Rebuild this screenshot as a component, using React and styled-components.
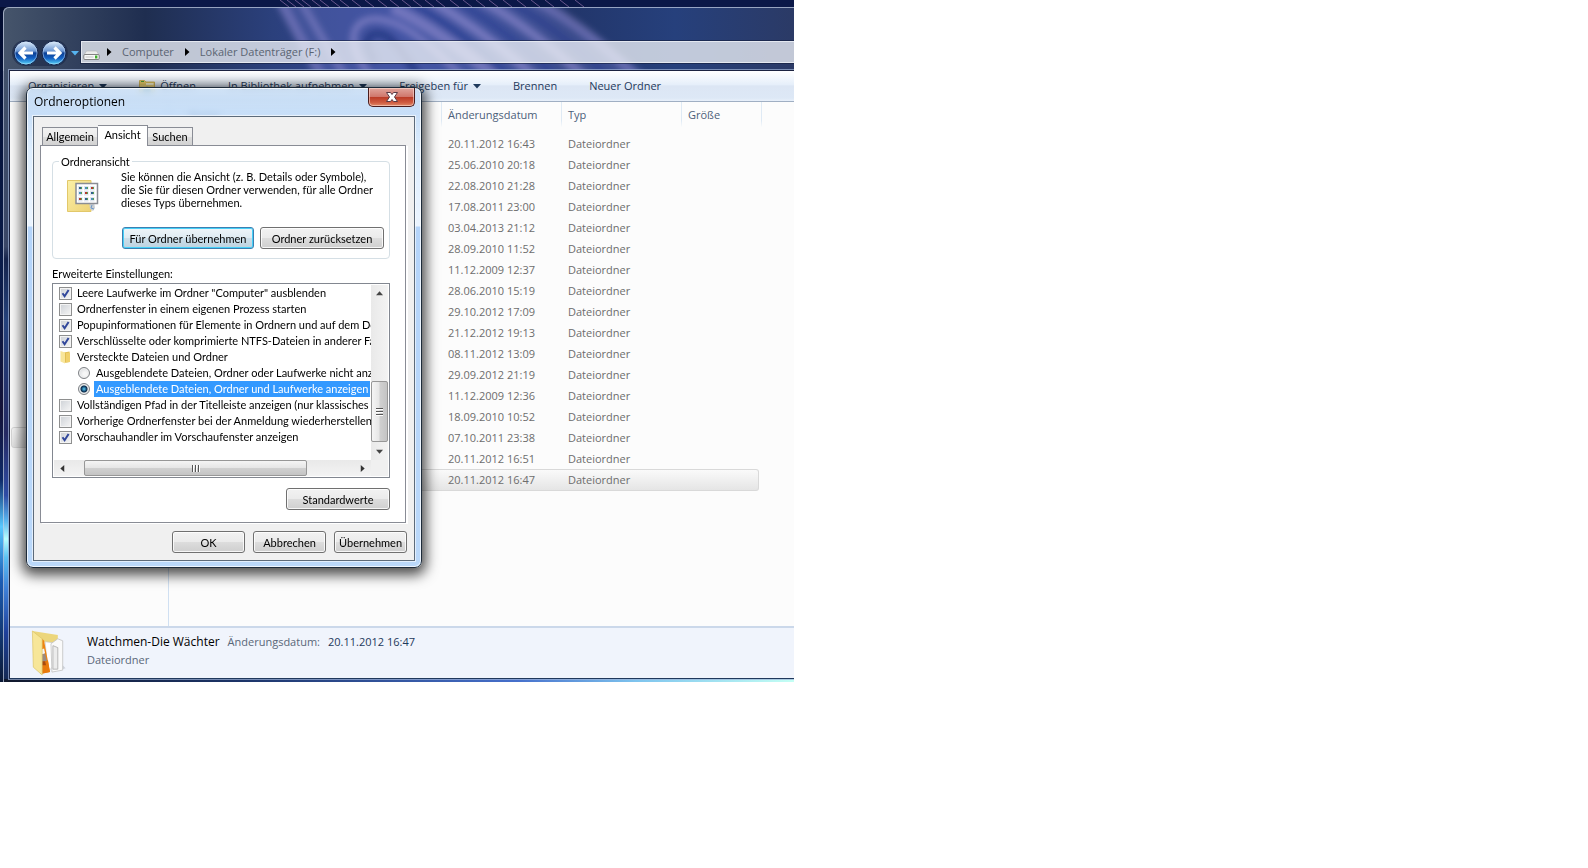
import React from "react";
import styled, { createGlobalStyle, css } from "styled-components";

const GlobalStyle = createGlobalStyle`
  * {
    box-sizing: border-box;
  }
  body {
    margin: 0;
    background: #ffffff;
    font-family: "Open Sans", "Noto Sans", sans-serif;
    font-size: 11px;
    line-height: 16px;
  }
  button, input {
    font: inherit;
    margin: 0;
  }
`;

/* desktop + explorer window */

const Desktop = styled.main`
  position: relative;
  width: 50%;
  overflow: hidden;
  padding: 7px 0 0 3px;
  background: #081536;
`;

const WallpaperSvg = styled.svg`
  position: absolute;
  top: 0;
  left: 0;
  width: 100%;
  height: 100%;
`;

const Explorer = styled.section`
  position: relative;
  border: 1px solid rgba(200, 210, 230, 0.7);
  border-right: 0;
  border-bottom: 0;
  border-top-left-radius: 6px;
  padding: 33px 0 3px 5px;
`;

const NavBar = styled.nav`
  display: flex;
  align-items: center;
  height: 24px;
  margin-bottom: 5px;
  padding-left: 3px;
`;

const NavButtons = styled.div`
  display: flex;
  gap: 2px;
  padding: 0 1px;
  border-radius: 14px;
  background: rgba(20, 32, 64, 0.5);
`;

const NavButton = styled.button`
  width: 26px;
  height: 26px;
  padding: 0;
  border: 0;
  background: none;
  svg {
    display: block;
  }
`;

const HistoryButton = styled.button`
  width: 13px;
  height: 20px;
  padding: 0;
  border: 0;
  background: none;
`;

const AddressBar = styled.div`
  flex: 1;
  align-self: flex-start;
  display: flex;
  align-items: center;
  gap: 9px;
  height: 22px;
  padding-left: 1px;
  border: 1px solid #e4e8f0;
  border-right: 0;
  outline: 1px solid rgba(20, 30, 60, 0.6);
  background: rgba(235, 238, 245, 0.79);
`;

const DriveSvg = styled.svg`
  align-self: flex-end;
  margin-right: -4px;
`;

const Crumb = styled.button`
  padding: 0;
  border: 0;
  background: none;
  color: #5a6472;
`;

const Client = styled.div`
  border-top: 1px solid #1c2340;
  border-left: 1px solid #1c2340;
  border-bottom: 1px solid #20385c;
  outline: 1px solid rgba(160, 180, 215, 0.7);
  background: #fcfcfc;
`;

const CommandBar = styled.div`
  display: flex;
  align-items: center;
  height: 31px;
  padding-left: 18px;
  gap: 32px;
  border-bottom: 1px solid #a0afc3;
  background: linear-gradient(#ffffff, #e6effa 45%, #dce6f4 50%, #dde8f6 90%, #e8f0fa);
`;

const Command = styled.button`
  display: flex;
  align-items: center;
  gap: 5px;
  padding: 0;
  border: 0;
  background: none;
  color: #1e395b;
  white-space: nowrap;
`;

const Body = styled.div`
  display: flex;
  height: 524px;
`;

const NavPane = styled.aside`
  width: 159px;
  flex: none;
  padding: 325px 8px 0 1px;
  border-right: 1px solid #d0e0f2;
`;

const NavSelection = styled.div`
  height: 21px;
  border: 1px solid #d9d9d9;
  border-radius: 3px;
  background: linear-gradient(#fafafa, #e6e6e6);
`;

const FileArea = styled.div`
  flex: 1;
  overflow: hidden;
`;

const FileTable = styled.table`
  width: 591px;
  margin-left: 2px;
  table-layout: fixed;
  border-collapse: separate;
  border-spacing: 0;
  text-align: left;
`;

const HeadCell = styled.th`
  height: 31px;
  padding: 0 6px 6px;
  font-weight: 400;
  color: #4c607a;
  border-right: 1px solid;
  border-image: linear-gradient(#dfeaf5 60%, transparent 80%) 1;

  &:first-child {
    padding-left: 18px;
  }
`;

const Cell = styled.td`
  height: 21px;
  padding: 0 6px;
  color: #6d6d6d;
  line-height: 16px;
`;

const FileRow = styled.tr`
  ${(props) =>
    props.$selected &&
    css`
      ${Cell} {
        height: 22px;
        border: solid #d9d9d9;
        border-width: 1px 0;
        background: linear-gradient(#fafafa, #e5e5e5);
      }
      ${Cell}:first-child {
        border-left-width: 1px;
        border-radius: 3px 0 0 3px;
      }
      ${Cell}:last-child {
        border-right-width: 1px;
        border-radius: 0 3px 3px 0;
      }
    `}
`;

const DetailsPane = styled.footer`
  display: flex;
  gap: 20px;
  height: 52px;
  padding: 2px 0 0 21px;
  border-top: 2px solid #cbd8ea;
  background: #f0f4fc;
  color: #5a6779;
`;

const DetailsText = styled.div`
  padding-top: 3px;
  line-height: 18px;
`;

const DetailsLine = styled.div`
  display: flex;
  gap: 8px;
`;

const FileTitle = styled.span`
  font-size: 12px;
  color: #000000;
`;

const DetailsValue = styled.span`
  color: #1e395b;
`;

/* dialog */

const Dialog = styled.section`
  position: absolute;
  top: 87px;
  left: 26px;
  width: 396px;
  padding: 0 6px 6px;
  border: 1px solid #1d2b3a;
  border-radius: 7px;
  background: linear-gradient(
      rgba(205, 225, 246, 0.78),
      rgba(185, 214, 246, 0.8) 24px,
      rgba(218, 236, 254, 0.94) 60px,
      rgba(234, 244, 255, 0.96) 138px,
      #b4d4fa 139px,
      #bad8fa
    );
  backdrop-filter: blur(3px);
  box-shadow: inset 0 0 0 1px rgba(255, 255, 255, 0.75), 0 3px 13px 4px rgba(0, 0, 0, 0.7);
`;

const TitleBar = styled.header`
  display: flex;
  justify-content: space-between;
  height: 28px;
`;

const DialogTitle = styled.h1`
  margin: 5px 0 0 1px;
  font-size: 12px;
  line-height: 18px;
  font-weight: 400;
  color: #000000;
`;

const CloseButton = styled.button`
  width: 47px;
  height: 19px;
  padding: 0;
  border: 1px solid #4a1c1c;
  border-top: 0;
  border-radius: 0 0 5px 5px;
  background: linear-gradient(#e0a59c, #d0776c 48%, #b93a26 50%, #cf5b40 80%, #e08a68);
  box-shadow: inset 0 0 0 1px rgba(255, 220, 210, 0.6);
  svg {
    display: block;
    margin: 0 auto;
  }
`;

const DialogBody = styled.div`
  padding: 8px 7px 7px 6px;
  border: 1px solid #5d6b7a;
  outline: 1px solid rgba(255, 255, 255, 0.6);
  background: #f0f0f0;
  font-family: Lato, "Liberation Sans", sans-serif;
  font-size: 11px;
  line-height: 13px;
  color: #000000;
`;

const Tabs = styled.div`
  display: flex;
  align-items: flex-end;
  padding-left: 2px;
`;

const Tab = styled.button`
  height: ${(props) => (props.$active ? 21 : 18)}px;
  width: ${(props) => props.$width}px;
  padding: 0;
  border: 1px solid #898c95;
  border-bottom: 0;
  color: #000000;
  white-space: nowrap;
  background: ${(props) => (props.$active ? "#ffffff" : "linear-gradient(#f2f2f2, #ebebeb 50%, #dddddd 51%, #d2d2d2)")};

  & + & {
    border-left-width: ${(props) => (props.$active ? 1 : 0)}px;
  }

  ${(props) =>
    props.$active &&
    css`
      position: relative;
      margin-bottom: -1px;
      padding-bottom: 3px;
    `}
`;

const TabPanel = styled.div`
  margin-right: 1px;
  padding: 9px 15px 12px 11px;
  border: 1px solid #898c95;
  background: #ffffff;
  box-shadow: 2px 1px 0 #ffffff;
`;

const Group = styled.fieldset`
  margin: 0;
  padding: 2px 5px 9px 14px;
  border: 1px solid #d5dfe5;
  border-radius: 4px;
  min-width: 0;
`;

const Legend = styled.legend`
  margin-left: -8px;
  padding: 0 2px;
`;

const GroupText = styled.div`
  display: flex;
  gap: 22px;
  svg {
    flex: none;
    margin-top: 10px;
  }
`;

const Paragraph = styled.p`
  margin: 0;
  white-space: nowrap;
`;

const ButtonRow = styled.div`
  display: flex;
  justify-content: flex-end;
  gap: ${(props) => props.$gap || 6}px;
  margin-top: ${(props) => props.$top}px;
`;

const Button = styled.button`
  width: ${(props) => props.$width || 73}px;
  height: 22px;
  padding: 0;
  white-space: nowrap;
  border: 1px solid #707070;
  border-radius: 3px;
  color: #000000;
  background: linear-gradient(#f2f2f2, #ebebeb 48%, #dddddd 50%, #cfcfcf);
  box-shadow: inset 0 0 0 1px rgba(255, 255, 255, 0.8);

  ${(props) =>
    props.$focused &&
    css`
      border-color: #3c7fb1;
      background: linear-gradient(#eef5f9, #dfebf2 48%, #ccdee9 50%, #bdd3e0);
      box-shadow: inset 0 0 0 1px #46d0f8;
    `}
`;

const ListLabel = styled.div`
  margin: 8px 0 3px;
`;

const ListBox = styled.div`
  display: grid;
  grid-template-columns: minmax(0, 1fr) 17px;
  grid-template-rows: 175px 16px;
  padding: 1px;
  border: 1px solid #828790;
`;

const Options = styled.div`
  overflow: hidden;
`;

const Option = styled.label`
  display: flex;
  align-items: center;
  gap: 3px;
  height: 16px;
  padding-left: ${(props) => (props.$nested ? 24 : 5)}px;
  white-space: nowrap;
`;

const OptionText = styled.span`
  padding: 0 2px;
  line-height: 16px;
  ${(props) =>
    props.$selected &&
    css`
      background: #3399ff;
      color: #ffffff;
    `}
`;

const CheckBox = styled.input`
  appearance: none;
  flex: none;
  width: 13px;
  height: 13px;
  border: 1px solid #8e8f8f;
  background: linear-gradient(135deg, #cdd1d6, #f6f6f6);
  box-shadow: inset 0 0 0 1px #f4f4f4;

  &:checked {
    background: url("data:image/svg+xml,%3Csvg xmlns='http://www.w3.org/2000/svg' viewBox='0 0 11 11'%3E%3Cpath d='M2.5 5.2 4.6 8.2 8.6 2' fill='none' stroke='%2331479b' stroke-width='2'/%3E%3C/svg%3E"),
      linear-gradient(135deg, #cdd1d6, #f6f6f6);
  }
`;

const Radio = styled.input`
  appearance: none;
  flex: none;
  width: 12px;
  height: 12px;
  margin-right: 1px;
  border: 1px solid #7d8084;
  border-radius: 50%;
  background: radial-gradient(circle at 60% 60%, #f6f6f6 20%, #cfd2d6);
  box-shadow: inset 0 0 0 1px #f0f0f0;

  &:checked {
    background: radial-gradient(circle, #5fd0f0 0, #1c5d8c 2px, #0b2b48 3px, #d5dade 4px);
  }
`;

const ScrollBar = styled.div`
  display: flex;
  flex-direction: ${(props) => (props.$vertical ? "column" : "row")};
  background: linear-gradient(${(props) => (props.$vertical ? "to right" : "to bottom")}, #e9e9e9, #f3f3f3);
`;

const Arrow = styled.button`
  flex: none;
  display: flex;
  align-items: center;
  justify-content: center;
  width: 17px;
  height: 16px;
  padding: 0;
  border: 0;
  background: none;
`;

const Track = styled.div`
  flex: ${(props) => props.$size} 0 0;
`;

const Thumb = styled.div`
  flex: ${(props) => props.$size} 0 0;
  display: flex;
  flex-direction: ${(props) => (props.$vertical ? "column" : "row")};
  align-items: center;
  justify-content: center;
  gap: 1px;
  border: 1px solid #979797;
  border-radius: 2px;
  background: linear-gradient(${(props) => (props.$vertical ? "to right" : "to bottom")}, #f5f5f5, #e6e6e6 48%, #d0d0d0 52%, #c4c4c4);
`;

const Grip = styled.span`
  width: ${(props) => (props.$vertical ? 7 : 2)}px;
  height: ${(props) => (props.$vertical ? 2 : 7)}px;
  background: ${(props) => (props.$vertical ? "linear-gradient(#555 50%, #fff 50%)" : "linear-gradient(to right, #555 50%, #fff 50%)")};
`;

const Corner = styled.div`
  background: #f0f0f0;
`;

/* drawings */

const Wallpaper = () => (
  <WallpaperSvg viewBox="0 0 794 682" preserveAspectRatio="none" aria-hidden="true">
    <defs>
      <linearGradient id="glass">
        <stop offset="0" stopColor="#46556b" />
        <stop offset=".08" stopColor="#34435f" />
        <stop offset=".18" stopColor="#1f2e50" />
        <stop offset=".34" stopColor="#2b407c" />
        <stop offset=".5" stopColor="#34489a" />
        <stop offset=".62" stopColor="#2c4288" />
        <stop offset=".72" stopColor="#22366b" />
        <stop offset=".85" stopColor="#26407c" />
        <stop offset="1" stopColor="#2b3a66" />
      </linearGradient>
      <linearGradient id="edge" x1="0" y1="0" x2="0" y2="1">
        <stop offset="0" stopColor="#42516b" />
        <stop offset=".3" stopColor="#3a4768" />
        <stop offset=".32" stopColor="#16244c" />
        <stop offset=".42" stopColor="#25427c" />
        <stop offset=".6" stopColor="#252a62" />
        <stop offset=".7" stopColor="#2f4da5" />
        <stop offset=".74" stopColor="#5ab4ee" />
        <stop offset=".77" stopColor="#b8ffff" />
        <stop offset=".8" stopColor="#5cc2f4" />
        <stop offset=".85" stopColor="#3f80d8" />
        <stop offset=".92" stopColor="#1e409a" />
        <stop offset="1" stopColor="#142850" />
      </linearGradient>
      <linearGradient id="bottomEdge">
        <stop offset="0" stopColor="#10182c" />
        <stop offset=".3" stopColor="#1c3468" />
        <stop offset=".65" stopColor="#4670cc" />
        <stop offset=".8" stopColor="#7ec4ee" />
        <stop offset="1" stopColor="#c4fff4" />
      </linearGradient>
      <linearGradient id="desk" x1="0" y1="0" x2="0" y2="1">
        <stop offset="0" stopColor="#040e30" />
        <stop offset=".4" stopColor="#0a1c4a" />
        <stop offset=".6" stopColor="#141238" />
        <stop offset=".7" stopColor="#0e2a68" />
        <stop offset=".77" stopColor="#58c8ff" />
        <stop offset=".85" stopColor="#1c5cb4" />
        <stop offset="1" stopColor="#0a1836" />
      </linearGradient>
      <filter id="soft" x="-10%" y="-20%" width="120%" height="140%">
        <feGaussianBlur stdDeviation="3" />
      </filter>
    </defs>
    <path d="M0 7H9V682H0Z" fill="url(#desk)" />
    <path d="M0 0H794V7H0Z" fill="#0b1848" />
    <g stroke="#9a78b0" strokeWidth="1" opacity=".65">
      {[280, 287, 295, 302, 312, 320, 331, 340, 352, 365, 378, 390, 402, 413, 425, 436, 450, 463, 476, 489, 503, 517, 531, 545, 560, 575].map((x) => (
        <path key={x} d={`M${x} 0l9 7`} />
      ))}
    </g>
    <path d="M9 7H794V71H3V13Q3 7 9 7Z" fill="url(#glass)" />
    <svg x="4" y="8" width="790" height="62" viewBox="4 8 790 62">
      <g fill="none" stroke="#8684c8" filter="url(#soft)">
        <path d="M276 0H540L655 80H325Z" fill="#5866b4" stroke="none" opacity=".45" />
        <path d="M280 0C290 20 304 45 322 78" strokeWidth="10" opacity=".55" />
        <path d="M300 0C314 24 326 44 346 78" strokeWidth="7" opacity=".6" />
        <path d="M372 78C338 36 356 14 384 20S440 55 466 80" strokeWidth="6" opacity=".75" />
        <path d="M376 62C362 44 366 32 380 34S404 56 420 78" stroke="#233a86" strokeWidth="9" opacity=".9" />
        <path d="M392 8C420 20 462 48 498 80" strokeWidth="11" opacity=".7" />
        <path d="M412 4C450 24 480 48 512 80" stroke="#2a4192" strokeWidth="7" opacity=".8" />
        <path d="M430 0C470 24 510 54 538 80" strokeWidth="9" opacity=".75" />
        <path d="M455 0C490 20 530 52 560 80" stroke="#2a4192" strokeWidth="7" opacity=".7" />
        <path d="M480 0C515 18 560 54 588 80" strokeWidth="9" opacity=".7" />
        <path d="M505 0C545 20 585 54 612 80" stroke="#2a3f8c" strokeWidth="6" opacity=".8" />
        <path d="M535 0C570 18 610 50 640 80" strokeWidth="10" opacity=".55" />
      </g>
    </svg>
    <path d="M4 60H10V682H4Z" fill="url(#edge)" />
    <path d="M4 679H794V682H4Z" fill="url(#bottomEdge)" />
  </WallpaperSvg>
);

const NavIcon = ({ forward }) => (
  <svg width="26" height="26" viewBox="0 0 26 26">
    <defs>
      <linearGradient id="navTop" x1="0" y1="0" x2="0" y2="1">
        <stop offset="0" stopColor="#e4f0fb" />
        <stop offset=".42" stopColor="#6d98d4" />
        <stop offset=".5" stopColor="#0c3f94" />
        <stop offset=".72" stopColor="#1462c4" />
        <stop offset="1" stopColor="#5fe0ff" />
      </linearGradient>
    </defs>
    <circle cx="13" cy="13" r="12" fill="url(#navTop)" stroke="#15264e" />
    <circle cx="13" cy="13" r="11" fill="none" stroke="#c8e0f8" strokeOpacity=".5" />
    <g transform={forward ? "rotate(180 13 13)" : undefined}>
      <path d="M20 13H8M12.5 7.5 7 13l5.500 5.500" fill="none" stroke="#fff" strokeWidth="3.200" />
    </g>
  </svg>
);

const Caret = ({ dir = "down", color = "#1e395b", size = 8 }) => {
  const turn = { down: 0, left: 90, up: 180, right: 270 }[dir];
  return (
    <svg width={size} height={size} viewBox="0 0 8 8" aria-hidden="true">
      <path d="M0 2h8L4 6.500Z" fill={color} transform={`rotate(${turn} 4 4)`} />
    </svg>
  );
};

const DriveIcon = () => (
  <DriveSvg width="17" height="17" viewBox="0 0 17 17" aria-hidden="true">
    <path d="M3.500 6h10l2.500 4H1Z" fill="#ececec" stroke="#b4b4b4" strokeWidth=".6" />
    <rect x=".8" y="9.500" width="15.400" height="5" rx="1.200" fill="#f8f8f8" stroke="#777" strokeWidth=".9" />
    <path d="M2.500 12h8" stroke="#c4c4c4" />
    <rect x="12" y="10.500" width="2.400" height="3" fill="#3fae2a" />
  </DriveSvg>
);

const OpenFolderIcon = () => (
  <svg width="16" height="16" viewBox="0 0 16 16" aria-hidden="true">
    <path d="M.5 14V2.500h5l1.500 1.500H15.500V14Z" fill="#ecd06c" stroke="#c8a848" strokeWidth=".8" />
    <path d="M7 5h7.500v2H7Z" fill="#fdf6d0" />
    <path d="M2 3.500h3" stroke="#4a9d3a" />
    <path d="M.8 14V7h14.400V14Z" fill="#f5dc82" />
    <path d="M4 14c0-7 8-7 8 0Z" fill="#5d9bb8" />
  </svg>
);

const FolderViewIcon = () => (
  <svg width="32" height="32" viewBox="0 0 32 32" aria-hidden="true">
    <defs>
      <linearGradient id="folderPaper" x1="0" y1="0" x2="1" y2="1">
        <stop offset="0" stopColor="#fbf0a6" />
        <stop offset="1" stopColor="#edd277" />
      </linearGradient>
    </defs>
    <path d="M.5.500H24V31.500H.5Z" fill="url(#folderPaper)" stroke="#e2c86a" />
    <path d="M22 22h5l1 6-2 3-3-2Z" fill="#c8ccd0" />
    <path d="M25 25l-1 3 3 1" fill="none" stroke="#6d99c8" />
    <path d="M9 3.500H30.500V23.500H9Z" fill="#fff" stroke="#8a8d94" strokeWidth="1.500" />
    {[7, 12, 18].map((y, row) =>
      [12, 18, 24].map((x, col) => (
        <g key={`${x}-${y}`}>
          <rect x={x - 1} y={y - 1} width="4.500" height="4.500" fill="#dfe5ee" />
          <rect x={x} y={y} width="2" height="2" fill={["#30608c", "#4c8fb8", "#b53a2a"][(row + col) % 3]} />
          <rect x={x + 2} y={y} width="1" height="2" fill="#58a050" />
        </g>
      ))
    )}
  </svg>
);

const SmallFolderIcon = () => (
  <svg width="13" height="14" viewBox="0 0 13 14" aria-hidden="true">
    <path d="M5 2.500 10.500 1.500V12L5 13Z" fill="#e2bf52" />
    <path d="M1.500 1 6 2.500V13.500L1.500 11.500Z" fill="#f8e59a" />
    <path d="M7 3 11 2.500V12L7 12.500Z" fill="#f0d06c" />
  </svg>
);

const BigFolderIcon = () => (
  <svg width="36" height="46" viewBox="0 0 36 47" aria-hidden="true">
    <path d="M22 43l13-4-3-3Z" fill="#cfd4dc" />
    <path d="M1 1 27 5V14L8 12Z" fill="#ecd67c" />
    <path d="M14 12 22 13V37L17 43Z" fill="#ffffff" stroke="#c9c9c9" strokeWidth=".7" />
    <path d="M20 14 27 9 32 11V41L21 43Z" fill="#fafafa" stroke="#c0c0c0" strokeWidth=".8" />
    <path d="M22 16 27 18V40H22Z" fill="#ececec" stroke="#b0b0b0" strokeWidth=".9" />
    <path d="M11 9 13 11 19 43 9 45Z" fill="#ee8410" />
    <path d="M10 20 13 19 14 24 10 25Z" fill="#f4f4f4" />
    <path d="M10 25 14 24 16 32 10 33Z" fill="#9c8c80" />
    <path d="M9 34 17 31 19 43 9 45Z" fill="#e87a0c" />
    <path d="M10 36 15 36 14 32 10 32Z" fill="#a84c10" />
    <path d="M1 1 11 9V46L2 38Z" fill="#f7e698" stroke="#dcc468" strokeWidth=".7" />
  </svg>
);

const CloseIcon = () => (
  <svg width="14" height="12" viewBox="0 0 14 12" aria-hidden="true">
    <path d="M1.500 1.500h4L7 3.500l1.500-2h4L9.500 6l3 4.500h-4L7 8.500l-1.500 2h-4L4.500 6Z" fill="#fff" stroke="#5a3a44" strokeWidth="1" />
  </svg>
);

const commands = [
  { label: "Organisieren", menu: true },
  { label: "Öffnen", icon: true },
  { label: "In Bibliothek aufnehmen", menu: true },
  { label: "Freigeben für", menu: true },
  { label: "Brennen" },
  { label: "Neuer Ordner" },
];

const dates = [
  "20.11.2012 16:43",
  "25.06.2010 20:18",
  "22.08.2010 21:28",
  "17.08.2011 23:00",
  "03.04.2013 21:12",
  "28.09.2010 11:52",
  "11.12.2009 12:37",
  "28.06.2010 15:19",
  "29.10.2012 17:09",
  "21.12.2012 19:13",
  "08.11.2012 13:09",
  "29.09.2012 21:19",
  "11.12.2009 12:36",
  "18.09.2010 10:52",
  "07.10.2011 23:38",
  "20.11.2012 16:51",
  "20.11.2012 16:47",
];

const options = [
  { type: "check", checked: true, label: 'Leere Laufwerke im Ordner "Computer" ausblenden' },
  { type: "check", label: "Ordnerfenster in einem eigenen Prozess starten" },
  { type: "check", checked: true, label: "Popupinformationen für Elemente in Ordnern und auf dem Desktop" },
  { type: "check", checked: true, label: "Verschlüsselte oder komprimierte NTFS-Dateien in anderer Farbe" },
  { type: "folder", label: "Versteckte Dateien und Ordner" },
  { type: "radio", label: "Ausgeblendete Dateien, Ordner oder Laufwerke nicht anzeigen" },
  { type: "radio", checked: true, label: "Ausgeblendete Dateien, Ordner und Laufwerke anzeigen" },
  { type: "check", label: "Vollständigen Pfad in der Titelleiste anzeigen (nur klassisches Design)" },
  { type: "check", label: "Vorherige Ordnerfenster bei der Anmeldung wiederherstellen" },
  { type: "check", checked: true, label: "Vorschauhandler im Vorschaufenster anzeigen" },
];

const OptionItem = ({ type, checked, label }) => (
  <Option as={type === "folder" ? "div" : "label"} $nested={type === "radio"}>
    {type === "check" && <CheckBox type="checkbox" defaultChecked={checked} />}
    {type === "radio" && <Radio type="radio" name="hidden-files" defaultChecked={checked} />}
    {type === "folder" && <SmallFolderIcon />}
    <OptionText $selected={type === "radio" && checked}>{label}</OptionText>
  </Option>
);

const FolderOptions = () => (
  <Dialog role="dialog" aria-labelledby="dialog-title">
    <TitleBar>
      <DialogTitle id="dialog-title">Ordneroptionen</DialogTitle>
      <CloseButton aria-label="Schließen">
        <CloseIcon />
      </CloseButton>
    </TitleBar>
    <DialogBody>
      <Tabs role="tablist">
        <Tab role="tab" $width={56}>Allgemein</Tab>
        <Tab role="tab" aria-selected="true" $active $width={50}>Ansicht</Tab>
        <Tab role="tab" $width={45}>Suchen</Tab>
      </Tabs>
      <TabPanel role="tabpanel">
        <Group>
          <Legend>Ordneransicht</Legend>
          <GroupText>
            <FolderViewIcon />
            <Paragraph>
              Sie können die Ansicht (z. B. Details oder Symbole),
              <br />
              die Sie für diesen Ordner verwenden, für alle Ordner
              <br />
              dieses Typs übernehmen.
            </Paragraph>
          </GroupText>
          <ButtonRow $top={15}>
            <Button $width={132} $focused>Für Ordner übernehmen</Button>
            <Button $width={124}>Ordner zurücksetzen</Button>
          </ButtonRow>
        </Group>
        <ListLabel>Erweiterte Einstellungen:</ListLabel>
        <ListBox>
          <Options>
            {options.map((option) => (
              <OptionItem key={option.label} {...option} />
            ))}
          </Options>
          <ScrollBar $vertical>
            <Arrow aria-label="Nach oben">
              <Caret dir="up" color="#444" size={7} />
            </Arrow>
            <Track $size={81} />
            <Thumb $vertical $size={59}>
              <Grip $vertical />
              <Grip $vertical />
              <Grip $vertical />
            </Thumb>
            <Track $size={2} />
            <Arrow aria-label="Nach unten">
              <Caret color="#444" size={7} />
            </Arrow>
          </ScrollBar>
          <ScrollBar>
            <Arrow aria-label="Nach links">
              <Caret dir="left" color="#333" size={7} />
            </Arrow>
            <Track $size={13} />
            <Thumb $size={222}>
              <Grip />
              <Grip />
              <Grip />
            </Thumb>
            <Track $size={47} />
            <Arrow aria-label="Nach rechts">
              <Caret dir="right" color="#333" size={7} />
            </Arrow>
          </ScrollBar>
          <Corner />
        </ListBox>
        <ButtonRow $top={10}>
          <Button $width={104}>Standardwerte</Button>
        </ButtonRow>
      </TabPanel>
      <ButtonRow $top={8} $gap={8}>
        <Button>OK</Button>
        <Button>Abbrechen</Button>
        <Button>Übernehmen</Button>
      </ButtonRow>
    </DialogBody>
  </Dialog>
);

const App = () => {
  return (
    <>
      <GlobalStyle />
      <Desktop>
        <Wallpaper />
        <Explorer>
          <NavBar>
            <NavButtons>
              <NavButton aria-label="Zurück">
                <NavIcon />
              </NavButton>
              <NavButton aria-label="Vorwärts">
                <NavIcon forward />
              </NavButton>
            </NavButtons>
            <HistoryButton aria-label="Verlauf">
              <Caret color="#56b4f0" />
            </HistoryButton>
            <AddressBar>
              <DriveIcon />
              <Caret dir="right" color="#000" />
              <Crumb>Computer</Crumb>
              <Caret dir="right" color="#000" />
              <Crumb>Lokaler Datenträger (F:)</Crumb>
              <Caret dir="right" color="#000" />
            </AddressBar>
          </NavBar>
          <Client>
            <CommandBar>
              {commands.map(({ label, icon, menu }) => (
                <Command key={label}>
                  {icon && <OpenFolderIcon />}
                  {label}
                  {menu && <Caret />}
                </Command>
              ))}
            </CommandBar>
            <Body>
              <NavPane>
                <NavSelection />
              </NavPane>
              <FileArea>
                <FileTable>
                  <colgroup>
                    <col />
                    <col width="120" />
                    <col width="120" />
                    <col width="77" />
                    <col width="3" />
                  </colgroup>
                  <thead>
                    <tr>
                      <HeadCell>Name</HeadCell>
                      <HeadCell>Änderungsdatum</HeadCell>
                      <HeadCell>Typ</HeadCell>
                      <HeadCell colSpan={2}>Größe</HeadCell>
                    </tr>
                  </thead>
                  <tbody>
                    {dates.map((date, i) => (
                      <FileRow key={date} $selected={i === dates.length - 1}>
                        <Cell />
                        <Cell>{date}</Cell>
                        <Cell>Dateiordner</Cell>
                        <Cell />
                      </FileRow>
                    ))}
                  </tbody>
                </FileTable>
              </FileArea>
            </Body>
            <DetailsPane>
              <BigFolderIcon />
              <DetailsText>
                <DetailsLine>
                  <FileTitle>Watchmen-Die Wächter</FileTitle>
                  <span>Änderungsdatum:</span>
                  <DetailsValue>20.11.2012 16:47</DetailsValue>
                </DetailsLine>
                <div>Dateiordner</div>
              </DetailsText>
            </DetailsPane>
          </Client>
        </Explorer>
        <FolderOptions />
      </Desktop>
    </>
  );
};

export default App;
